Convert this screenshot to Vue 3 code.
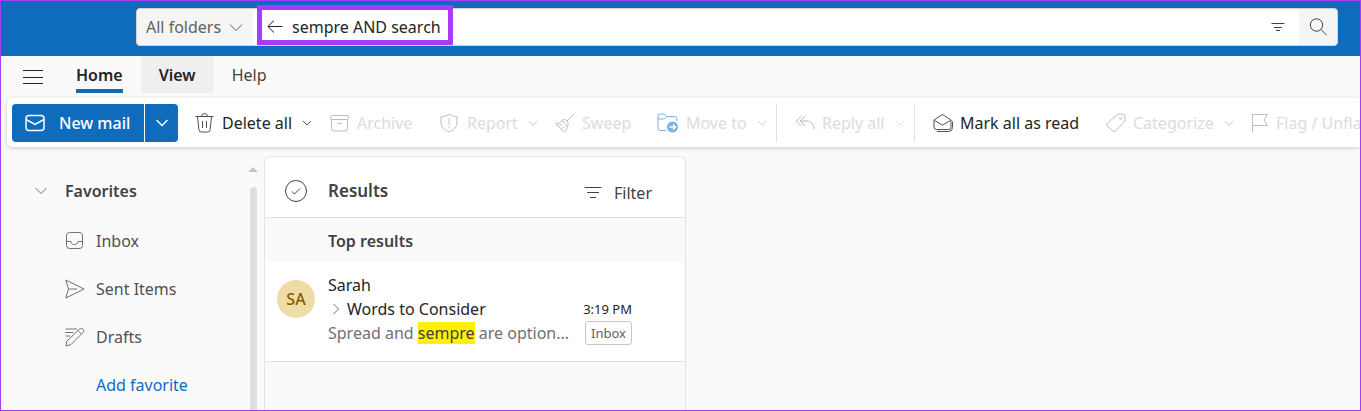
<script setup>
import { ref } from 'vue'

const query = ref('sempre AND search')
const scope = ref('All folders')
</script>

<template>
  <div class="window">
    <header class="topbar">
      <form class="search" role="search" @submit.prevent>
        <label class="scope">
          <select v-model="scope" aria-label="Search scope">
            <option>All folders</option>
            <option>Inbox</option>
          </select>
          <svg class="scope-arrow" width="14" height="10" viewBox="0 0 14 10"><path d="M1 1.5l6 6 6-6" /></svg>
        </label>
        <div class="query">
          <button type="button" class="plain back" aria-label="Exit search">
            <svg width="16" height="14" viewBox="0 0 16 14"><path d="M7 .5L.8 6.500 7 12.500M1 6.500h14.500" /></svg>
          </button>
          <input v-model="query" type="text" aria-label="Search" />
          <span class="highlight" aria-hidden="true"></span>
        </div>
        <button type="button" class="plain options" aria-label="Search filters">
          <svg width="14" height="10" viewBox="0 0 14 10"><path d="M.5 1.500h13M3 5.500h8M5 8.500h4" /></svg>
        </button>
        <button type="submit" class="plain go" aria-label="Search">
          <svg width="18" height="18" viewBox="0 0 18 18"><circle cx="7.500" cy="7" r="6.200" /><path d="M12 11.500l5.500 5.500" /></svg>
        </button>
      </form>
    </header>

    <nav class="tabs">
      <button type="button" class="plain menu" aria-label="Navigation pane">
        <svg width="20" height="16" viewBox="0 0 20 16"><path d="M0 1.500h20M0 8.500h20M0 14.500h20" /></svg>
      </button>
      <button type="button" class="tab current"><span>Home</span></button>
      <button type="button" class="tab hovered"><span>View</span></button>
      <button type="button" class="tab"><span>Help</span></button>
    </nav>

    <div class="toolbar">
      <div class="split">
        <button type="button" class="new-mail">
          <svg width="20" height="18" viewBox="0 0 20 18"><rect x="1" y="1.500" width="18" height="15" rx="3" /><path d="M1 5.500l9 5 9-5" /></svg>
          New mail
        </button>
        <button type="button" class="more" aria-label="More new items">
          <svg width="12" height="8" viewBox="0 0 12 8"><path d="M.5 1L6 6.500 11.500 1" /></svg>
        </button>
      </div>
      <button type="button" class="tool">
        <svg width="20" height="20" viewBox="0 0 20 20"><path d="M.5 3.500h18M6.500 3.500a3 3 0 0 1 6 0M2.500 3.500l1.400 13a2.500 2.500 0 0 0 2.500 2.500h6.200a2.500 2.500 0 0 0 2.500-2.500L16.500 3.500M7.500 8v7M11.500 8v7" /></svg>
        Delete all
        <svg class="chev" width="10" height="6" viewBox="0 0 10 6"><path d="M1 1l4 4 4-4" /></svg>
      </button>
      <button type="button" class="tool" disabled>
        <svg width="20" height="20" viewBox="0 0 20 20"><rect x=".5" y="2.500" width="18" height="4" rx="1" /><path d="M1.500 6.500v9a2.500 2.500 0 0 0 2.500 2.500h11a2.500 2.500 0 0 0 2.500-2.500v-9M7.500 10.500h4" /></svg>
        Archive
      </button>
      <button type="button" class="tool" disabled>
        <svg width="20" height="20" viewBox="0 0 20 20"><path d="M9 1c2.200 1.700 4.500 2.600 8 2.800V9c0 5-3 8.200-8 10-5-1.800-8-5-8-10V3.800C4.500 3.600 6.800 2.700 9 1zM9 5.500v6M9 13.500v1.500" /></svg>
        Report
        <svg class="chev" width="10" height="6" viewBox="0 0 10 6"><path d="M1 1l4 4 4-4" /></svg>
      </button>
      <button type="button" class="tool" disabled>
        <svg width="20" height="20" viewBox="0 0 20 20"><path d="M19 1l-7 7M7 7.500C8.500 6 10.500 6 12 7.800c1.600 1.700 1.600 3.200.3 4.700M7 7.500l5.300 5.500c0 2.500-1 4.500-2.800 6L.8 11c2.700-.3 4.700-1.300 6.200-3.500zM4 12.500l2.500-1M7 15.500l2-2" /></svg>
        Sweep
      </button>
      <button type="button" class="tool move" disabled>
        <svg width="22" height="20" viewBox="0 0 22 20"><path d="M9 17.500H3.500A2.500 2.500 0 0 1 1 15V3.500A2.500 2.500 0 0 1 3.500 1H7l2.500 2.500h8A2.500 2.500 0 0 1 20 6v2M1 6h5.500c1.500 0 2-1 3-2.500" /><circle class="solid" cx="15.500" cy="14" r="5.500" /><path class="arrow" d="M12.500 14h6M16 11.500l2.500 2.500-2.500 2.500" /></svg>
        Move to
        <svg class="chev" width="10" height="6" viewBox="0 0 10 6"><path d="M1 1l4 4 4-4" /></svg>
      </button>
      <button type="button" class="tool ruled" disabled>
        <svg width="20" height="16" viewBox="0 0 20 16"><path d="M6.500 1L1 6l5.500 5M10.500 1L5 6l5.500 5" /><path class="violet" d="M5.500 6H11" /><path d="M11 6h1c4 0 6.500 2.500 7 8.500" /></svg>
        Reply all
        <svg class="chev faint" width="10" height="6" viewBox="0 0 10 6"><path d="M1 1l4 4 4-4" /></svg>
      </button>
      <button type="button" class="tool ruled">
        <svg width="20" height="20" viewBox="0 0 20 20"><path d="M1 7l8.500-5.500L18 7v7a2.500 2.500 0 0 1-2.500 2.500h-12A2.500 2.500 0 0 1 1 14zM1.500 7.500l8 4.500 8-4.500M4 18.500h11.500a4 4 0 0 0 4-4V8.500" /></svg>
        Mark all as read
      </button>
      <button type="button" class="tool" disabled>
        <svg width="20" height="20" viewBox="0 0 20 20"><path d="M11.500 1.200L17 1a2 2 0 0 1 2 2l-.2 5.500-9.600 9.600a2 2 0 0 1-2.800 0l-5-5a2 2 0 0 1 0-2.800z" /><circle cx="14.500" cy="5.500" r="1" /></svg>
        Categorize
        <svg class="chev" width="10" height="6" viewBox="0 0 10 6"><path d="M1 1l4 4 4-4" /></svg>
      </button>
      <button type="button" class="tool" disabled>
        <svg width="18" height="20" viewBox="0 0 18 20"><path d="M1.500 19V1.500h15l-3.500 5.500 3.500 5.500H1.500" /></svg>
        Flag / Unflag
      </button>
    </div>

    <main class="content">
      <nav class="folders" aria-label="Folders">
        <button type="button" class="group">
          <svg width="12" height="8" viewBox="0 0 12 8"><path d="M.5 1L6 6.500 11.500 1" /></svg>
          Favorites
        </button>
        <a class="folder" href="#inbox">
          <svg width="20" height="20" viewBox="0 0 20 20"><rect x="1.500" y="1.500" width="16" height="16" rx="3" /><path d="M1.500 10.500H6c.5 3 1.500 3 3.500 3s3-.5 3.500-3h4.500" /></svg>
          Inbox
        </a>
        <a class="folder" href="#sent">
          <svg width="20" height="20" viewBox="0 0 20 20"><path d="M.8 1L19 10 .8 19l2.700-9zM3.500 10H12" /></svg>
          Sent Items
        </a>
        <a class="folder" href="#drafts">
          <svg width="20" height="20" viewBox="0 0 20 20"><path d="M1 19l1-5L14.500 2c2.500-2 5.500 1 3.500 3.500L6 17.500zM13 3.500L16.500 7M.5 2H12M.5 5.500h8M.5 9h4.500" /></svg>
          Drafts
        </a>
        <a class="folder add" href="#add">Add favorite</a>
        <div class="scrollbar" aria-hidden="true">
          <svg width="10" height="6" viewBox="0 0 10 6"><path d="M5 0l5 5H0z" /></svg>
          <span class="thumb"></span>
        </div>
      </nav>

      <section class="results">
        <div class="results-head">
          <button type="button" class="plain pick" aria-label="Select all">
            <svg width="24" height="24" viewBox="0 0 24 24"><circle cx="12" cy="12" r="10.500" /><path d="M8 12.500l2.500 2.500 5.500-5.500" /></svg>
          </button>
          <h2>Results</h2>
          <button type="button" class="plain filter">
            <svg width="18" height="14" viewBox="0 0 18 14"><path d="M.5 1.500h17M3 6.500h12M6 11.500h6" /></svg>
            Filter
          </button>
        </div>
        <h3>Top results</h3>
        <article class="mail">
          <span class="avatar">SA</span>
          <div class="summary">
            <div class="sender">Sarah</div>
            <div class="subject">
              <svg width="8" height="12" viewBox="0 0 8 12"><path d="M1.500 1l5 5-5 5" /></svg>
              <span>Words to Consider</span>
              <time>3:19 PM</time>
            </div>
            <div class="preview">
              <span>Spread and <mark>sempre</mark> are option...</span>
              <span class="tag">Inbox</span>
            </div>
          </div>
        </article>
      </section>
    </main>
  </div>
</template>

<style>
body {
  background: #fafafa;
}
</style>

<style scoped>
.window {
  box-sizing: border-box;
  min-height: 100vh;
  display: flex;
  flex-direction: column;
  overflow: hidden;
  border: 1px solid #a63cfb;
  background: #fafafa;
  color: #242424;
  font: 16px/24px "Noto Sans", "Open Sans", sans-serif;
}
.window *,
.window *::before {
  box-sizing: border-box;
}
button,
input,
select {
  margin: 0;
  padding: 0;
  border: 0;
  background: none;
  color: inherit;
  font: inherit;
}
svg {
  flex: none;
  fill: none;
  stroke: currentColor;
  stroke-width: 1;
}
.plain {
  display: flex;
  align-items: center;
  justify-content: center;
}
.topbar {
  padding: 7px 22px 10px 135px;
  background: #0f6cbd;
}
.search {
  display: flex;
  height: 38px;
  border: 1px solid #d1d1d1;
  border-radius: 4px;
  background: #fff;
}
.scope {
  position: relative;
  width: 116px;
  background: #f5f5f5;
  border-radius: 4px 0 0 4px;
  color: #616161;
}
.scope select {
  width: 100%;
  height: 100%;
  padding-left: 9px;
  appearance: none;
}
.scope-arrow {
  position: absolute;
  top: 14px;
  right: 10px;
  pointer-events: none;
}
.query {
  position: relative;
  display: flex;
  flex: 1;
  margin-left: 4px;
}
.back {
  width: 35px;
}
.query input {
  flex: 1;
  min-width: 0;
  outline: 0;
}
.highlight {
  position: absolute;
  top: -4px;
  left: 0;
  width: 196px;
  height: 40px;
  border: 5px solid #a63cfb;
  pointer-events: none;
}
.options {
  width: 42px;
}
.go {
  width: 38px;
  border-radius: 0 4px 4px 0;
  background: #f5f5f5;
}
.options,
.go {
  color: #424242;
}
.tabs {
  display: flex;
  height: 42px;
  padding-left: 22px;
}
.menu {
  width: 20px;
  height: 41px;
  margin-right: 15px;
}
.tab {
  display: flex;
  height: 37px;
  padding: 0 18px;
  color: #424242;
}
.tab span {
  height: 37px;
  padding-top: 7px;
}
.current,
.hovered {
  color: #242424;
  font-weight: 600;
}
.current span {
  border-bottom: 4px solid #0f6cbd;
}
.hovered {
  background: #efefef;
}
.toolbar {
  display: grid;
  grid-template-columns: 183px 135px 110px 115px 102px 119px 138px 192px 145px 150px;
  align-items: center;
  height: 49px;
  margin-left: 6px;
  padding-left: 5px;
  border-radius: 6px 0 0 6px;
  background: #fff;
  box-shadow: 0 1px 4px rgba(0, 0, 0, 0.2);
}
.split {
  display: flex;
  width: 166px;
  height: 38px;
  border-radius: 4px;
  overflow: hidden;
  color: #fff;
}
.new-mail,
.more {
  display: flex;
  align-items: center;
  background: #0f6cbd;
}
.new-mail {
  flex: 1;
  gap: 14px;
  padding-left: 13px;
  font-weight: 500;
}
.more {
  width: 33px;
  margin-left: 1px;
  justify-content: center;
}
.split svg {
  stroke-width: 1.5;
}
.tool {
  display: flex;
  align-items: center;
  gap: 7px;
  height: 38px;
  white-space: nowrap;
}
.tool svg {
  color: #505050;
}
.tool:disabled {
  color: #dcdcdc;
}
.tool:disabled svg {
  color: #bdbdbd;
}
.tool .chev {
  margin-left: 3px;
}
.tool:disabled .chev {
  color: #d0d0d0;
}
.tool:disabled .faint {
  color: #e2e2e2;
}
.tool.move svg:first-child {
  color: #79b2e4;
}
.solid {
  fill: #79b2e4;
  stroke: none;
}
.arrow {
  stroke: #fff;
  stroke-width: 1.5;
}
.violet {
  stroke: #c9a6d6;
}
.ruled {
  padding-left: 18px;
  border-left: 1px solid #e0e0e0;
}
.content {
  display: flex;
  flex: 1;
  padding-top: 9px;
}
.folders {
  position: relative;
  display: flex;
  flex-direction: column;
  width: 263px;
  color: #505050;
}
.folders svg {
  color: #707070;
}
.group {
  display: flex;
  align-items: center;
  gap: 18px;
  height: 52px;
  margin-top: 9px;
  padding-left: 34px;
  color: #424242;
  font-weight: 600;
}
.folder {
  display: flex;
  align-items: center;
  gap: 11px;
  height: 48px;
  padding-left: 64px;
  color: inherit;
  text-decoration: none;
}
.add {
  padding-left: 95px;
  color: #0f6cbd;
}
.scrollbar {
  position: absolute;
  top: 11px;
  right: 6px;
  bottom: 0;
  display: flex;
  flex-direction: column;
  align-items: center;
  gap: 14px;
}
.scrollbar svg {
  fill: #c4c4c4;
  stroke: none;
}
.thumb {
  flex: 1;
  width: 7px;
  border-radius: 4px 4px 0 0;
  background: #dedfe1;
}
.results {
  width: 422px;
  border: 1px solid #e4e4e4;
  border-bottom: 0;
  border-radius: 6px 6px 0 0;
}
.results-head {
  display: flex;
  align-items: center;
  height: 61px;
  padding: 8px 33px 0 19px;
  border-bottom: 1px solid #e0e0e0;
  border-radius: 6px 6px 0 0;
  background: #fff;
  color: #424242;
}
.pick {
  margin-right: 20px;
}
h2,
h3 {
  margin: 0;
  font-weight: 600;
}
h2 {
  flex: 1;
  font-size: 17px;
}
h3 {
  padding: 11px 0 9px 63px;
  color: #424242;
  font-size: 16px;
}
.filter {
  gap: 12px;
  padding-top: 3px;
}
.mail {
  display: flex;
  gap: 13px;
  padding: 11px 53px 16px 12px;
  border-bottom: 1px solid #e0e0e0;
  background: #fff;
}
.avatar {
  width: 38px;
  height: 38px;
  margin-top: 7px;
  border-radius: 50%;
  background: #eedda6;
  color: #835b00;
  font-weight: 500;
  line-height: 38px;
  text-align: center;
}
.summary {
  flex: 1;
  white-space: nowrap;
}
.subject,
.preview {
  display: flex;
  align-items: center;
  height: 24px;
}
.subject svg {
  margin: 0 7px 0 4px;
  color: #707070;
}
time {
  margin-left: auto;
  font-size: 13px;
}
.preview {
  color: #707070;
}
mark {
  background: #fff100;
  color: #424242;
}
.tag {
  margin-left: auto;
  padding: 0 5px;
  border: 1px solid #c7c7c7;
  border-radius: 3px;
  color: #616161;
  font-size: 13px;
  line-height: 22px;
}
</style>
